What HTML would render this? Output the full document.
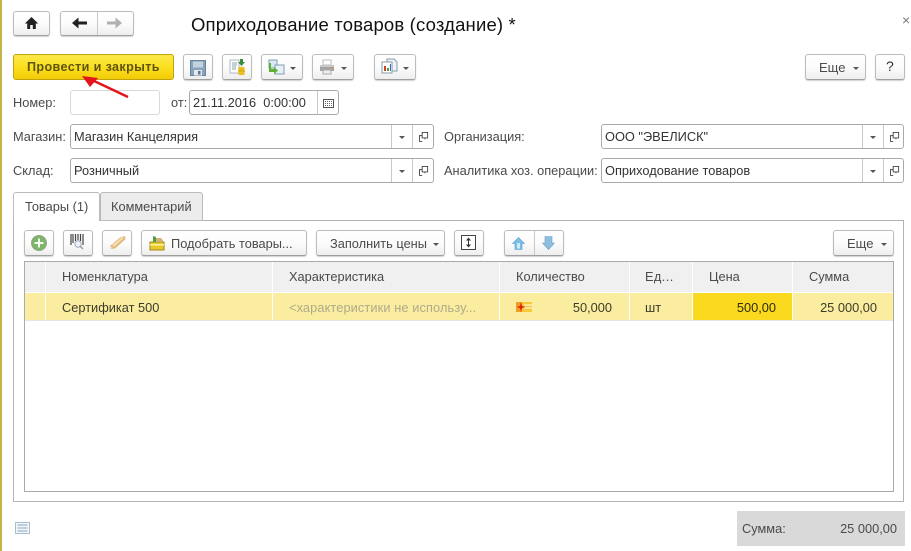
<!DOCTYPE html>
<html><head><meta charset="utf-8">
<style>
html,body{margin:0;padding:0;background:#fff}
#p{position:relative;width:911px;height:551px;overflow:hidden;background:#fff;font-family:"Liberation Sans",sans-serif;font-size:12.8px;color:#4a4a4a}
#p div,#p svg{position:absolute;box-sizing:border-box}
.t{white-space:nowrap;line-height:16px;height:16px}
.b{background:linear-gradient(#fff 0%,#fbfbfb 55%,#eeeeee 100%);border:1px solid #bcbcbc;border-bottom:1px solid #a0a0a0;border-radius:3px;box-shadow:0 1px 1px #d0d0d0;height:26px}
.f{background:#fff;border:1px solid #aaa;border-radius:3px;height:25px}
.v{width:1px;background:#c8c8c8}
.a{width:0;height:0;border-left:3px solid transparent;border-right:3px solid transparent;border-top:3px solid #555}
.h{background:#f0f0f0;height:30px;top:262px}
.c{background:#fbeda0;height:27px;top:293px}
</style></head><body><div id="p">
<div style="left:0;top:0;width:2px;height:551px;background:#c2b44a"></div>

<!-- top nav -->
<div class="b" style="left:13px;top:11px;width:37px;height:25px"></div>
<svg style="left:24px;top:16px" width="15" height="14" viewBox="0 0 15 14"><path d="M7.500 1L.8 7.500h2.400V13h3V9h2.600v4h3V7.500h2.400z" fill="#222"/></svg>
<div class="b" style="left:60px;top:11px;width:74px;height:25px"></div>
<div class="v" style="left:97px;top:12px;height:23px"></div>
<svg style="left:72px;top:17px" width="15" height="12" viewBox="0 0 15 12"><path d="M0 6L6.500 .5v4H15v3H6.500v4z" fill="#222"/></svg>
<svg style="left:107px;top:17px" width="15" height="12" viewBox="0 0 15 12"><path d="M15 6L8.500 .5v4H0v3h8.500v4z" fill="#b0b0b0"/></svg>
<div class="t" style="left:191px;top:14px;font-size:18.5px;line-height:22px;height:22px;color:#111;letter-spacing:.17px">Оприходование товаров (создание) *</div>
<div class="t" style="left:902px;top:12px;font-size:14px;color:#777">×</div>

<!-- command bar -->
<div style="left:13px;top:54px;width:161px;height:26px;border:1px solid #c2a50c;border-radius:3px;background:linear-gradient(#fbe94a,#fbdf1e 50%,#f2cc07)"></div>
<div class="t" style="left:27px;top:59px;font-weight:bold;font-size:12.6px;color:#5e5410;letter-spacing:.37px">Провести и закрыть</div>

<div class="b" style="left:183px;top:54px;width:30px"></div>
<svg style="left:190px;top:60px" width="16" height="16" viewBox="0 0 16 16"><path d="M.5 .5h15v15H.5z" fill="#8aa3bc" stroke="#6a839c"/><path d="M3 1.500h10v6H3z" fill="#c3d2e0"/><path d="M4 10h8v5.500H4z" fill="#e4e8ec"/><path d="M8 11h2.500v3.500H8z" fill="#5c7590"/></svg>
<div class="b" style="left:222px;top:54px;width:30px"></div>
<svg style="left:229px;top:58px" width="17" height="18" viewBox="0 0 17 18"><path d="M1 2h9v13H1z" fill="#fff" stroke="#b0b8c0"/><path d="M3 5h5M3 7h5M3 9h4M3 11h4" stroke="#8aa"/><path d="M11 1h3v3h2l-3.500 4L9 4h2z" fill="#3c8a3c"/><ellipse cx="12.500" cy="10.500" rx="3.500" ry="1.800" fill="#ecc020"/><ellipse cx="12.500" cy="13" rx="3.500" ry="1.800" fill="#e0b010"/><ellipse cx="12.500" cy="15.500" rx="3.500" ry="1.800" fill="#ecc020"/></svg>
<div class="b" style="left:261px;top:54px;width:42px"></div>
<svg style="left:268px;top:59px" width="17" height="16" viewBox="0 0 17 16"><path d="M1 1h8v8H1z" fill="#dbe8f2" stroke="#7f9fb8"/><path d="M7 6h9v9H7z" fill="#e6f0f6" stroke="#7f9fb8"/><path d="M3 4v6h3V8l4 3.500L6 15v-2H1V4z" fill="#5fb030"/></svg>
<div class="a" style="left:290px;top:67px"></div>
<div class="b" style="left:312px;top:54px;width:42px"></div>
<svg style="left:319px;top:59px" width="16" height="16" viewBox="0 0 16 16"><path d="M4 1h8v5H4z" fill="#fff" stroke="#bbb"/><path d="M1 6h14v6H1z" fill="#a4a4a4"/><path d="M1 6h14v2H1z" fill="#c8c8c8"/><path d="M4 11h8v4H4z" fill="#eee" stroke="#aaa"/><path d="M12 8h2v1h-2z" fill="#e08030"/></svg>
<div class="a" style="left:341px;top:67px"></div>
<div class="b" style="left:374px;top:54px;width:42px"></div>
<svg style="left:381px;top:58px" width="18" height="17" viewBox="0 0 18 17"><path d="M6 1h7l3 3v9H6z" fill="#eef3f8" stroke="#8a9aaa"/><path d="M1 4h10v11H1z" fill="#fff" stroke="#8a9aaa"/><path d="M3 8h2v5H3z" fill="#d04030"/><path d="M6 10h2v3H6z" fill="#50a040"/><path d="M9 6h1v7H9z" fill="#4070b0"/></svg>
<div class="a" style="left:403px;top:67px"></div>

<div class="b" style="left:805px;top:54px;width:61px"></div>
<div class="t" style="left:819px;top:60px;font-size:13px">Еще</div>
<div class="a" style="left:853px;top:67px"></div>
<div class="b" style="left:875px;top:54px;width:30px"></div>
<div class="t" style="left:886px;top:58px;font-size:14px;color:#333">?</div>

<!-- fields -->
<div class="t" style="left:13px;top:95px">Номер:</div>
<div class="f" style="left:70px;top:90px;width:90px;border-color:#d8d8d8"></div>
<div class="t" style="left:171px;top:95px">от:</div>
<div class="f" style="left:189px;top:90px;width:150px"></div>
<div class="v" style="left:317px;top:91px;height:23px"></div>
<div class="t" style="left:193px;top:95px;color:#333;white-space:pre">21.11.2016  0:00:00</div>
<svg style="left:323px;top:99px" width="11" height="9" viewBox="0 0 11 9"><path d="M.5 .5h10v8H.5z" fill="#fff" stroke="#555"/><path d="M2 2.500h8M2 4.500h8M2 6.500h8" stroke="#666" stroke-dasharray="1 1"/></svg>

<div class="t" style="left:13px;top:129px">Магазин:</div>
<div class="f" style="left:70px;top:124px;width:364px"></div>
<div class="v" style="left:391px;top:125px;height:23px"></div><div class="v" style="left:412px;top:125px;height:23px"></div>
<div class="a" style="left:399px;top:136px"></div>
<svg style="left:419px;top:132px" width="10" height="10" viewBox="0 0 11 11"><path d="M3.500 .5h6v6h-6zM3.500 4h-3v6.500M.5 10.500h3M6.500 7v1" fill="none" stroke="#444"/></svg>
<div class="t" style="left:74px;top:129px;color:#333">Магазин Канцелярия</div>

<div class="t" style="left:13px;top:163px">Склад:</div>
<div class="f" style="left:70px;top:158px;width:364px"></div>
<div class="v" style="left:391px;top:159px;height:23px"></div><div class="v" style="left:412px;top:159px;height:23px"></div>
<div class="a" style="left:399px;top:170px"></div>
<svg style="left:419px;top:166px" width="10" height="10" viewBox="0 0 11 11"><path d="M3.500 .5h6v6h-6zM3.500 4h-3v6.500M.5 10.500h3M6.500 7v1" fill="none" stroke="#444"/></svg>
<div class="t" style="left:74px;top:163px;color:#333">Розничный</div>

<div class="t" style="left:444px;top:129px">Организация:</div>
<div class="f" style="left:601px;top:124px;width:303px"></div>
<div class="v" style="left:862px;top:125px;height:23px"></div><div class="v" style="left:883px;top:125px;height:23px"></div>
<div class="a" style="left:870px;top:136px"></div>
<svg style="left:890px;top:132px" width="10" height="10" viewBox="0 0 11 11"><path d="M3.500 .5h6v6h-6zM3.500 4h-3v6.500M.5 10.500h3M6.500 7v1" fill="none" stroke="#444"/></svg>
<div class="t" style="left:605px;top:129px;color:#333">ООО "ЭВЕЛИСК"</div>

<div class="t" style="left:444px;top:163px">Аналитика хоз. операции:</div>
<div class="f" style="left:601px;top:158px;width:303px"></div>
<div class="v" style="left:862px;top:159px;height:23px"></div><div class="v" style="left:883px;top:159px;height:23px"></div>
<div class="a" style="left:870px;top:170px"></div>
<svg style="left:890px;top:166px" width="10" height="10" viewBox="0 0 11 11"><path d="M3.500 .5h6v6h-6zM3.500 4h-3v6.500M.5 10.500h3M6.500 7v1" fill="none" stroke="#444"/></svg>
<div class="t" style="left:605px;top:163px;color:#333">Оприходование товаров</div>

<!-- arrow overlay -->
<svg style="left:75px;top:70px" width="60" height="32" viewBox="0 0 60 32"><path d="M53 27L17 10" stroke="#e3141c" stroke-width="2.400" fill="none"/><path d="M7 6L23 8L15 17z" fill="#e3141c"/></svg>

<!-- panel + tabs -->
<div style="left:13px;top:220px;width:891px;height:282px;border:1px solid #b4b4b4"></div>
<div style="left:100px;top:192px;width:103px;height:29px;background:#ececec;border:1px solid #bbb;border-radius:3px 3px 0 0"></div>
<div style="left:13px;top:192px;width:87px;height:29px;background:#fff;border:1px solid #bbb;border-bottom:0;border-radius:3px 3px 0 0"></div>
<div class="t" style="left:25px;top:199px">Товары (1)</div>
<div class="t" style="left:111px;top:199px">Комментарий</div>

<!-- table toolbar -->
<div class="b" style="left:24px;top:230px;width:30px"></div>
<svg style="left:31px;top:235px" width="16" height="16" viewBox="0 0 16 16"><circle cx="8" cy="8" r="7.500" fill="#7db56a" stroke="#8aa87e"/><path d="M7 3.500h2v3.500h3.500v2H9v3.500H7V9H3.500V7H7z" fill="#f4fbef"/></svg>
<div class="b" style="left:63px;top:230px;width:30px"></div>
<svg style="left:70px;top:233px" width="16" height="18" viewBox="0 0 16 18"><path d="M1 1v11M3 1v9M5.500 1v7M8 1v6M10.500 1v7M13 1v11" stroke="#444" stroke-width="1.200"/><circle cx="8" cy="11" r="3.200" fill="#eef4f8" stroke="#9ab"/><path d="M10 13l3 3" stroke="#999" stroke-width="1.500"/></svg>
<div class="b" style="left:102px;top:230px;width:30px"></div>
<svg style="left:110px;top:235px" width="16" height="14" viewBox="0 0 16 14"><path d="M0 11L10 2.500 15 1l.5 3L5 13.500 1 14z" fill="#e0b678"/><path d="M2 10L12 2l2 1L4 12z" fill="#f3dcae"/><path d="M0 11l3 2-3 1z" fill="#f3e6c8"/></svg>
<div class="b" style="left:141px;top:230px;width:166px"></div>
<svg style="left:149px;top:234px" width="16" height="17" viewBox="0 0 16 17"><path d="M1 8h14v8H1z" fill="#e8c830" stroke="#a08a10"/><path d="M4 2l3 1v5H4z" fill="#50a040"/><path d="M7 4h5l3 4H7z" fill="#d4b078"/><path d="M1 10h14v1.500H1z" fill="#fff3a0"/></svg>
<div class="t" style="left:171px;top:236px">Подобрать товары...</div>
<div class="b" style="left:316px;top:230px;width:129px"></div>
<div class="t" style="left:330px;top:236px">Заполнить цены</div>
<div class="a" style="left:433px;top:243px"></div>
<div class="b" style="left:454px;top:230px;width:30px"></div>
<svg style="left:461px;top:235px" width="16" height="16" viewBox="0 0 16 16"><path d="M.5 .5h14v14H.5z" fill="#fff" stroke="#444"/><path d="M7.500 2.500l2.500 3H8v4h2l-2.500 3-2.500-3h2v-4H5z" fill="#333"/></svg>
<div class="b" style="left:504px;top:230px;width:60px"></div>
<div class="v" style="left:534px;top:231px;height:24px"></div>
<svg style="left:512px;top:237px" width="13" height="13" viewBox="0 0 13 13"><path d="M6.500 .5l6 6H10v6H3v-6H.5z" fill="#7cbde4" stroke="#5a9cc8" stroke-width=".6"/><path d="M5 6h3v5.500H5z" fill="#cfe9f8"/></svg>
<svg style="left:542px;top:236px" width="13" height="14" viewBox="0 0 13 14"><path d="M6.500 13.500l6-6.500H10V.5H3V7H.5z" fill="#8fbfe0" stroke="#6a9cc0" stroke-width=".6"/></svg>
<div class="b" style="left:833px;top:230px;width:61px"></div>
<div class="t" style="left:847px;top:236px;font-size:13px">Еще</div>
<div class="a" style="left:881px;top:243px"></div>

<!-- table -->
<div style="left:24px;top:261px;width:870px;height:231px;border:1px solid #aaa"></div>
<div class="h" style="left:25px;width:20px"></div>
<div class="h" style="left:46px;width:226px"></div>
<div class="h" style="left:273px;width:226px"></div>
<div class="h" style="left:500px;width:129px"></div>
<div class="h" style="left:630px;width:62px"></div>
<div class="h" style="left:693px;width:99px"></div>
<div class="h" style="left:793px;width:100px"></div>
<div class="c" style="left:25px;width:20px"></div>
<div class="c" style="left:46px;width:226px"></div>
<div class="c" style="left:273px;width:226px"></div>
<div class="c" style="left:500px;width:129px"></div>
<div class="c" style="left:630px;width:62px"></div>
<div class="c" style="left:693px;width:99px;background:#fbd91f"></div>
<div class="c" style="left:793px;width:100px"></div>
<div style="left:25px;top:320px;width:868px;height:1px;background:#e6e6e6"></div>
<div class="t" style="left:62px;top:269px">Номенклатура</div>
<div class="t" style="left:289px;top:269px">Характеристика</div>
<div class="t" style="left:516px;top:269px">Количество</div>
<div class="t" style="left:645px;top:269px;letter-spacing:.4px">Ед...</div>
<div class="t" style="left:709px;top:269px">Цена</div>
<div class="t" style="left:809px;top:269px">Сумма</div>
<div class="t" style="left:62px;top:300px;color:#3c3c2c">Сертификат 500</div>
<div class="t" style="left:289px;top:300px;color:#b0aa8a;letter-spacing:.1px">&lt;характеристики не использу...</div>
<svg style="left:516px;top:301px" width="16" height="12" viewBox="0 0 16 12"><path d="M0 1h16v10H0z" fill="#f7c83a"/><path d="M0 1h6v10H0z" fill="#f0a020"/><path d="M8 4h8M8 7h8" stroke="#fff"/><path d="M5 1L6 5 9.500 6 6 7 5 11 4 7 .5 6 4 5z" fill="#e02010"/></svg>
<div class="t" style="right:299px;top:300px;color:#3c3c2c">50,000</div>
<div class="t" style="left:645px;top:300px;color:#3c3c2c">шт</div>
<div class="t" style="right:135px;top:300px;color:#2c2a10">500,00</div>
<div class="t" style="right:34px;top:300px;color:#3c3c2c">25 000,00</div>

<!-- footer -->
<svg style="left:15px;top:522px" width="15" height="12" viewBox="0 0 15 12"><path d="M.5 .5h14v11H.5z" fill="#f2f7fb" stroke="#a8bdd0"/><path d="M2.500 3h10M2.500 6h10M2.500 9h10" stroke="#8ba6bf"/></svg>
<div style="left:737px;top:511px;width:168px;height:35px;background:#d9d9d9"></div>
<div class="t" style="left:742px;top:521px">Сумма:</div>
<div class="t" style="right:14px;top:521px">25 000,00</div>
</div></body></html>
